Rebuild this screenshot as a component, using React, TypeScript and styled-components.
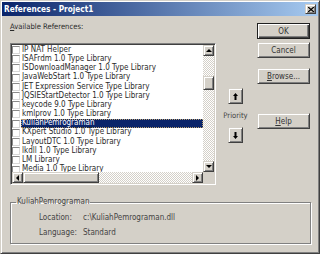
import React from 'react';
import styled, { createGlobalStyle, css } from 'styled-components';

const GlobalStyle = createGlobalStyle`
  html, body {
    margin: 0;
    padding: 0;
    background: #d4d0c8;
  }
  body {
    font-family: "DejaVu Sans Condensed", Tahoma, "Liberation Sans", sans-serif;
    font-size: 8px;
    color: #2a2a2a;
  }
`;

const raised = css`
  border: 1px solid;
  border-color: #d4d0c8 #404040 #404040 #d4d0c8;
  box-shadow: inset 1px 1px #fff, inset -1px -1px #808080;
  background: #d4d0c8;
  box-sizing: border-box;
`;

const Window = styled.div`
  width: 320px;
  height: 254px;
  box-sizing: border-box;
  padding: 1px;
  border: 1px solid;
  border-color: #d4d0c8 #404040 #404040 #d4d0c8;
  box-shadow: inset 1px 1px #fff, inset -1px -1px #808080;
  background: #d4d0c8;
  display: flex;
  flex-direction: column;
`;

const TitleBar = styled.div`
  height: 14px;
  display: flex;
  align-items: center;
  justify-content: space-between;
  padding: 0 2px 0 2px;
  background: linear-gradient(to right, #0a246a, #a6caf0);
`;

const TitleText = styled.span`
  color: #fff;
  font-weight: bold;
  font-size: 8.2px;
`;

const CloseButton = styled.div`
  ${raised};
  width: 11px;
  height: 10px;
  display: flex;
  align-items: center;
  justify-content: center;
`;

const Body = styled.div`
  flex: 1;
  display: flex;
  flex-direction: column;
  padding: 0 7px 0 8px;
`;

const TopArea = styled.div`
  display: flex;
`;

const LeftCol = styled.div`
  width: 206px;
  display: flex;
  flex-direction: column;
`;

const Label = styled.div`
  margin-top: 6px;
  line-height: 10px;
  height: 10px;
  font-size: 7.6px;
`;

const ListBox = styled.div`
  margin-top: 11px;
  height: 142px;
  box-sizing: border-box;
  border: 1px solid;
  border-color: #808080 #fff #fff #808080;
  box-shadow: inset 1px 1px #404040, inset -1px -1px #d4d0c8;
  padding: 1px;
  display: grid;
  grid-template-columns: 1fr 11px;
  grid-template-rows: 1fr 11px;
  background: #fff;
`;

const Items = styled.div`
  overflow: hidden;
  padding-top: 0.5px;
`;

const Row = styled.div`
  height: 9.2px;
  display: flex;
  align-items: center;
  white-space: nowrap;
`;

const Check = styled.span`
  width: 8px;
  height: 8px;
  box-sizing: border-box;
  border: 1px solid;
  border-color: #8a8a8a #d8d8d8 #d8d8d8 #8a8a8a;
  background: #fff;
  flex: none;
`;

const ItemText = styled.span<{ $selected?: boolean }>`
  margin-left: 1px;
  padding: 0 1px;
  line-height: 8.6px;
  ${p => p.$selected && css`
    flex: 1;
    background: #0a246a;
    color: #fff;
    outline: 1px dotted #b8a070;
    outline-offset: -1px;
  `}
`;

const Track = styled.div<{ $vertical?: boolean }>`
  display: flex;
  flex-direction: ${p => (p.$vertical ? 'column' : 'row')};
  background: repeating-conic-gradient(#fff 0 25%, #d4d0c8 0 50%) 0 0 / 2px 2px;
`;

const ScrollButton = styled.div`
  ${raised};
  width: 11px;
  height: 11px;
  flex: none;
  display: flex;
  align-items: center;
  justify-content: center;
`;

const Thumb = styled.div<{ $offset: number; $length: number; $vertical?: boolean }>`
  ${raised};
  flex: none;
  ${p => p.$vertical
    ? css`margin-top: ${p.$offset}px; height: ${p.$length}px; width: 11px;`
    : css`margin-left: ${p.$offset}px; width: ${p.$length}px; height: 11px;`}
`;

const Spacer = styled.div`
  flex: 1;
`;

const Corner = styled.div`
  background: #d4d0c8;
`;

const PriorityCol = styled.div`
  width: 39px;
  display: flex;
  flex-direction: column;
  align-items: center;
  padding-top: 72px;
`;

const SmallButton = styled.div`
  ${raised};
  width: 15px;
  height: 16px;
  display: flex;
  align-items: center;
  justify-content: center;
`;

const PriorityLabel = styled.div`
  height: 23px;
  line-height: 23px;
  font-size: 7.6px;
  color: #444;
`;

const ButtonCol = styled.div`
  margin-left: 2px;
  padding-top: 7px;
  display: flex;
  flex-direction: column;
`;

const Button = styled.div<{ $gap?: number; $default?: boolean }>`
  ${raised};
  width: 53px;
  height: 16px;
  margin-top: ${p => p.$gap ?? 0}px;
  display: flex;
  align-items: center;
  justify-content: center;
  color: #333;
  ${p => p.$default && css`
    border-color: #202020;
    box-shadow: inset 1px 1px #fff, inset -1px -1px #404040, inset -2px -2px #808080;
  `}
`;

const Group = styled.fieldset`
  margin: 12px 0 0 0;
  width: 301px;
  height: 47px;
  box-sizing: border-box;
  padding: 0 0 0 28px;
  border: 1px solid #808080;
  box-shadow: inset 1px 1px #fff, 1px 1px #fff;
  min-width: 0;
`;

const Legend = styled.legend`
  margin-left: -23px;
  padding: 0 1px;
  line-height: 10px;
  color: #444;
`;

const InfoGrid = styled.div`
  display: grid;
  grid-template-columns: 44px 1fr;
  grid-auto-rows: 15px;
  align-items: center;
  margin-top: 3px;
  color: #444;
`;

type Dir = 'up' | 'down' | 'left' | 'right';

const Triangle: React.FC<{ dir: Dir }> = ({ dir }) => {
  const pts: Record<Dir, string> = {
    up: '0,3 3,0 6,3',
    down: '0,0 6,0 3,3',
    left: '3,0 3,6 0,3',
    right: '0,0 0,6 3,3',
  };
  const vertical = dir === 'up' || dir === 'down';
  return (
    <svg width={vertical ? 6 : 3} height={vertical ? 3 : 6} viewBox={vertical ? '0 0 6 3' : '0 0 3 6'}>
      <polygon points={pts[dir]} fill="#000" />
    </svg>
  );
};

const BoldArrow: React.FC<{ down?: boolean }> = ({ down }) => (
  <svg width="5" height="7" viewBox="0 0 5 7" style={down ? { transform: 'rotate(180deg)' } : undefined}>
    <path d="M2.5 0 L5 3 L3.5 3 L3.5 7 L1.5 7 L1.5 3 L0 3 Z" fill="#000" />
  </svg>
);

const references = [
  'IP NAT Helper',
  'ISAFrdm 1.0 Type Library',
  'ISDownloadManager 1.0 Type Library',
  'JavaWebStart 1.0 Type Library',
  'JET Expression Service Type Library',
  'JQSIEStartDetector 1.0 Type Library',
  'keycode 9.0 Type Library',
  'kmlprov 1.0 Type Library',
  'KuliahPemrograman',
  'KXpert Studio 1.0 Type Library',
  'LayoutDTC 1.0 Type Library',
  'lkdll 1.0 Type Library',
  'LM Library',
  'Media 1.0 Type Library',
];

const selected = 'KuliahPemrograman';

const App: React.FC = () => (
  <>
    <GlobalStyle />
    <Window>
      <TitleBar>
        <TitleText>References - Project1</TitleText>
        <CloseButton>
          <svg width="6" height="5" viewBox="0 0 6 5">
            <path d="M0 0 L6 5 M6 0 L0 5" stroke="#000" strokeWidth="1.3" />
          </svg>
        </CloseButton>
      </TitleBar>
      <Body>
        <TopArea>
          <LeftCol>
            <Label><u>A</u>vailable References:</Label>
            <ListBox>
              <Items>
                {references.map(name => (
                  <Row key={name}>
                    <Check />
                    <ItemText $selected={name === selected}>{name}</ItemText>
                  </Row>
                ))}
              </Items>
              <Track $vertical>
                <ScrollButton><Triangle dir="up" /></ScrollButton>
                <Thumb $vertical $offset={20} $length={14} />
                <Spacer />
                <ScrollButton><Triangle dir="down" /></ScrollButton>
              </Track>
              <Track>
                <ScrollButton><Triangle dir="left" /></ScrollButton>
                <Thumb $offset={0} $length={76} />
                <Spacer />
                <ScrollButton><Triangle dir="right" /></ScrollButton>
              </Track>
              <Corner />
            </ListBox>
          </LeftCol>
          <PriorityCol>
            <SmallButton><BoldArrow /></SmallButton>
            <PriorityLabel>Priority</PriorityLabel>
            <SmallButton><BoldArrow down /></SmallButton>
          </PriorityCol>
          <ButtonCol>
            <Button $default>OK</Button>
            <Button $gap={3}>Cancel</Button>
            <Button $gap={10}><span><u>B</u>rowse...</span></Button>
            <Button $gap={29}><span><u>H</u>elp</span></Button>
          </ButtonCol>
        </TopArea>
        <Group>
          <Legend>KuliahPemrograman</Legend>
          <InfoGrid>
            <span>Location:</span>
            <span>c:\KuliahPemrograman.dll</span>
            <span>Language:</span>
            <span>Standard</span>
          </InfoGrid>
        </Group>
      </Body>
    </Window>
  </>
);

export default App;
